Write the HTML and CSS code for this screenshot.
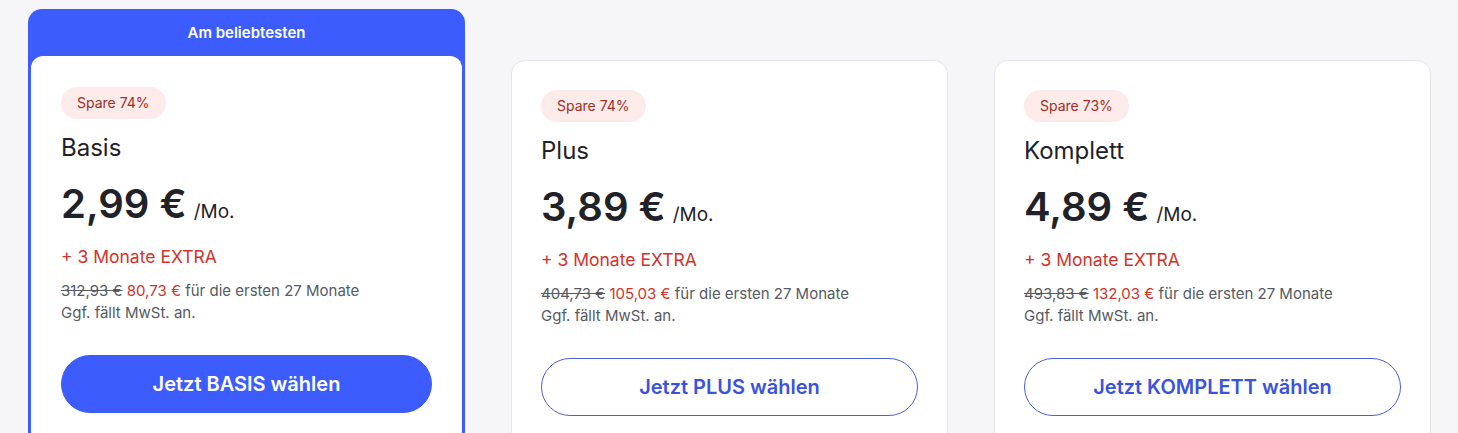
FILE: index.html
```html
<!DOCTYPE html>
<html lang="de">
<head>
    <meta charset="UTF-8">
    <meta name="viewport" content="width=device-width, initial-scale=1.0">
    <title>Tarife</title>
    <link rel="stylesheet" href="styles.css">
</head>
<body>
    <div class="plans">
        <div class="plan-featured">
            <div class="plan-label">Am beliebtesten</div>
            <div class="plan-body">
                <span class="badge">Spare 74%</span>
                <h2 class="plan-name">Basis</h2>
                <div class="price">2,99 €<span class="per">/Mo.</span></div>
                <div class="extra">+ 3 Monate EXTRA</div>
                <p class="details">
                    <s>312,93 €</s> <span class="total">80,73 €</span> für die ersten 27 Monate<br>
                    Ggf. fällt MwSt. an.
                </p>
                <button class="choose-btn primary">Jetzt BASIS wählen</button>
            </div>
        </div>

        <div class="plan">
            <span class="badge">Spare 74%</span>
            <h2 class="plan-name">Plus</h2>
            <div class="price">3,89 €<span class="per">/Mo.</span></div>
            <div class="extra">+ 3 Monate EXTRA</div>
            <p class="details">
                <s>404,73 €</s> <span class="total">105,03 €</span> für die ersten 27 Monate<br>
                Ggf. fällt MwSt. an.
            </p>
            <button class="choose-btn">Jetzt PLUS wählen</button>
        </div>

        <div class="plan">
            <span class="badge">Spare 73%</span>
            <h2 class="plan-name">Komplett</h2>
            <div class="price">4,89 €<span class="per">/Mo.</span></div>
            <div class="extra">+ 3 Monate EXTRA</div>
            <p class="details">
                <s>493,83 €</s> <span class="total">132,03 €</span> für die ersten 27 Monate<br>
                Ggf. fällt MwSt. an.
            </p>
            <button class="choose-btn">Jetzt KOMPLETT wählen</button>
        </div>
    </div>
</body>
</html>
```

FILE: styles.css
```css
* {
    margin: 0;
    padding: 0;
    box-sizing: border-box;
    font-family: 'Inter', 'Liberation Sans', sans-serif;
}

body {
    background: #f6f6f8;
    color: #1f2229;
    overflow: hidden;
}

.plans {
    display: flex;
    align-items: flex-start;
    gap: 46px;
    padding: 9px 28px 0;
}

.plan-featured {
    flex-shrink: 0;
    width: 437px;
    background: #3d5cfd;
    border-radius: 14px;
    padding: 0 3px 3px;
}

.plan-label {
    height: 47px;
    line-height: 47px;
    text-align: center;
    color: #fff;
    font-size: 15px;
    font-weight: 600;
}

.plan-body {
    background: #fff;
    border-radius: 12px;
    padding: 31px 30px 30px;
}

.plan {
    flex-shrink: 0;
    width: 437px;
    margin-top: 51px;
    background: #fff;
    border: 1px solid #e4e6eb;
    border-radius: 14px;
    padding: 29px 29px 30px;
}

.badge {
    display: inline-block;
    padding: 6px 16px;
    line-height: 20px;
    font-size: 14px;
    color: #9c2f27;
    background: #fcebe9;
    border-radius: 16px;
}

.plan-name {
    margin-top: 13px;
    font-size: 24px;
    line-height: 32px;
    font-weight: 400;
    color: #1f2229;
}

.price {
    margin-top: 16px;
    font-size: 40px;
    line-height: 48px;
    font-weight: 600;
    color: #1f2229;
}

.per {
    margin-left: 7px;
    font-size: 19px;
    line-height: 1;
    font-weight: 400;
}

.extra {
    margin-top: 16px;
    font-size: 17.5px;
    line-height: 26px;
    color: #d1322b;
}

.details {
    margin-top: 10px;
    font-size: 15px;
    line-height: 22px;
    color: #555a63;
}

.details s {
    color: #555a63;
}

.total {
    color: #d1322b;
}

.choose-btn {
    display: block;
    width: 100%;
    height: 58px;
    margin-top: 31px;
    border: 1px solid #4a60d4;
    border-radius: 29px;
    background: #fff;
    color: #3a53df;
    font-size: 20px;
    font-weight: 600;
    cursor: pointer;
}

.choose-btn.primary {
    background: #3d5cfd;
    border-color: #3d5cfd;
    color: #fff;
}
```
